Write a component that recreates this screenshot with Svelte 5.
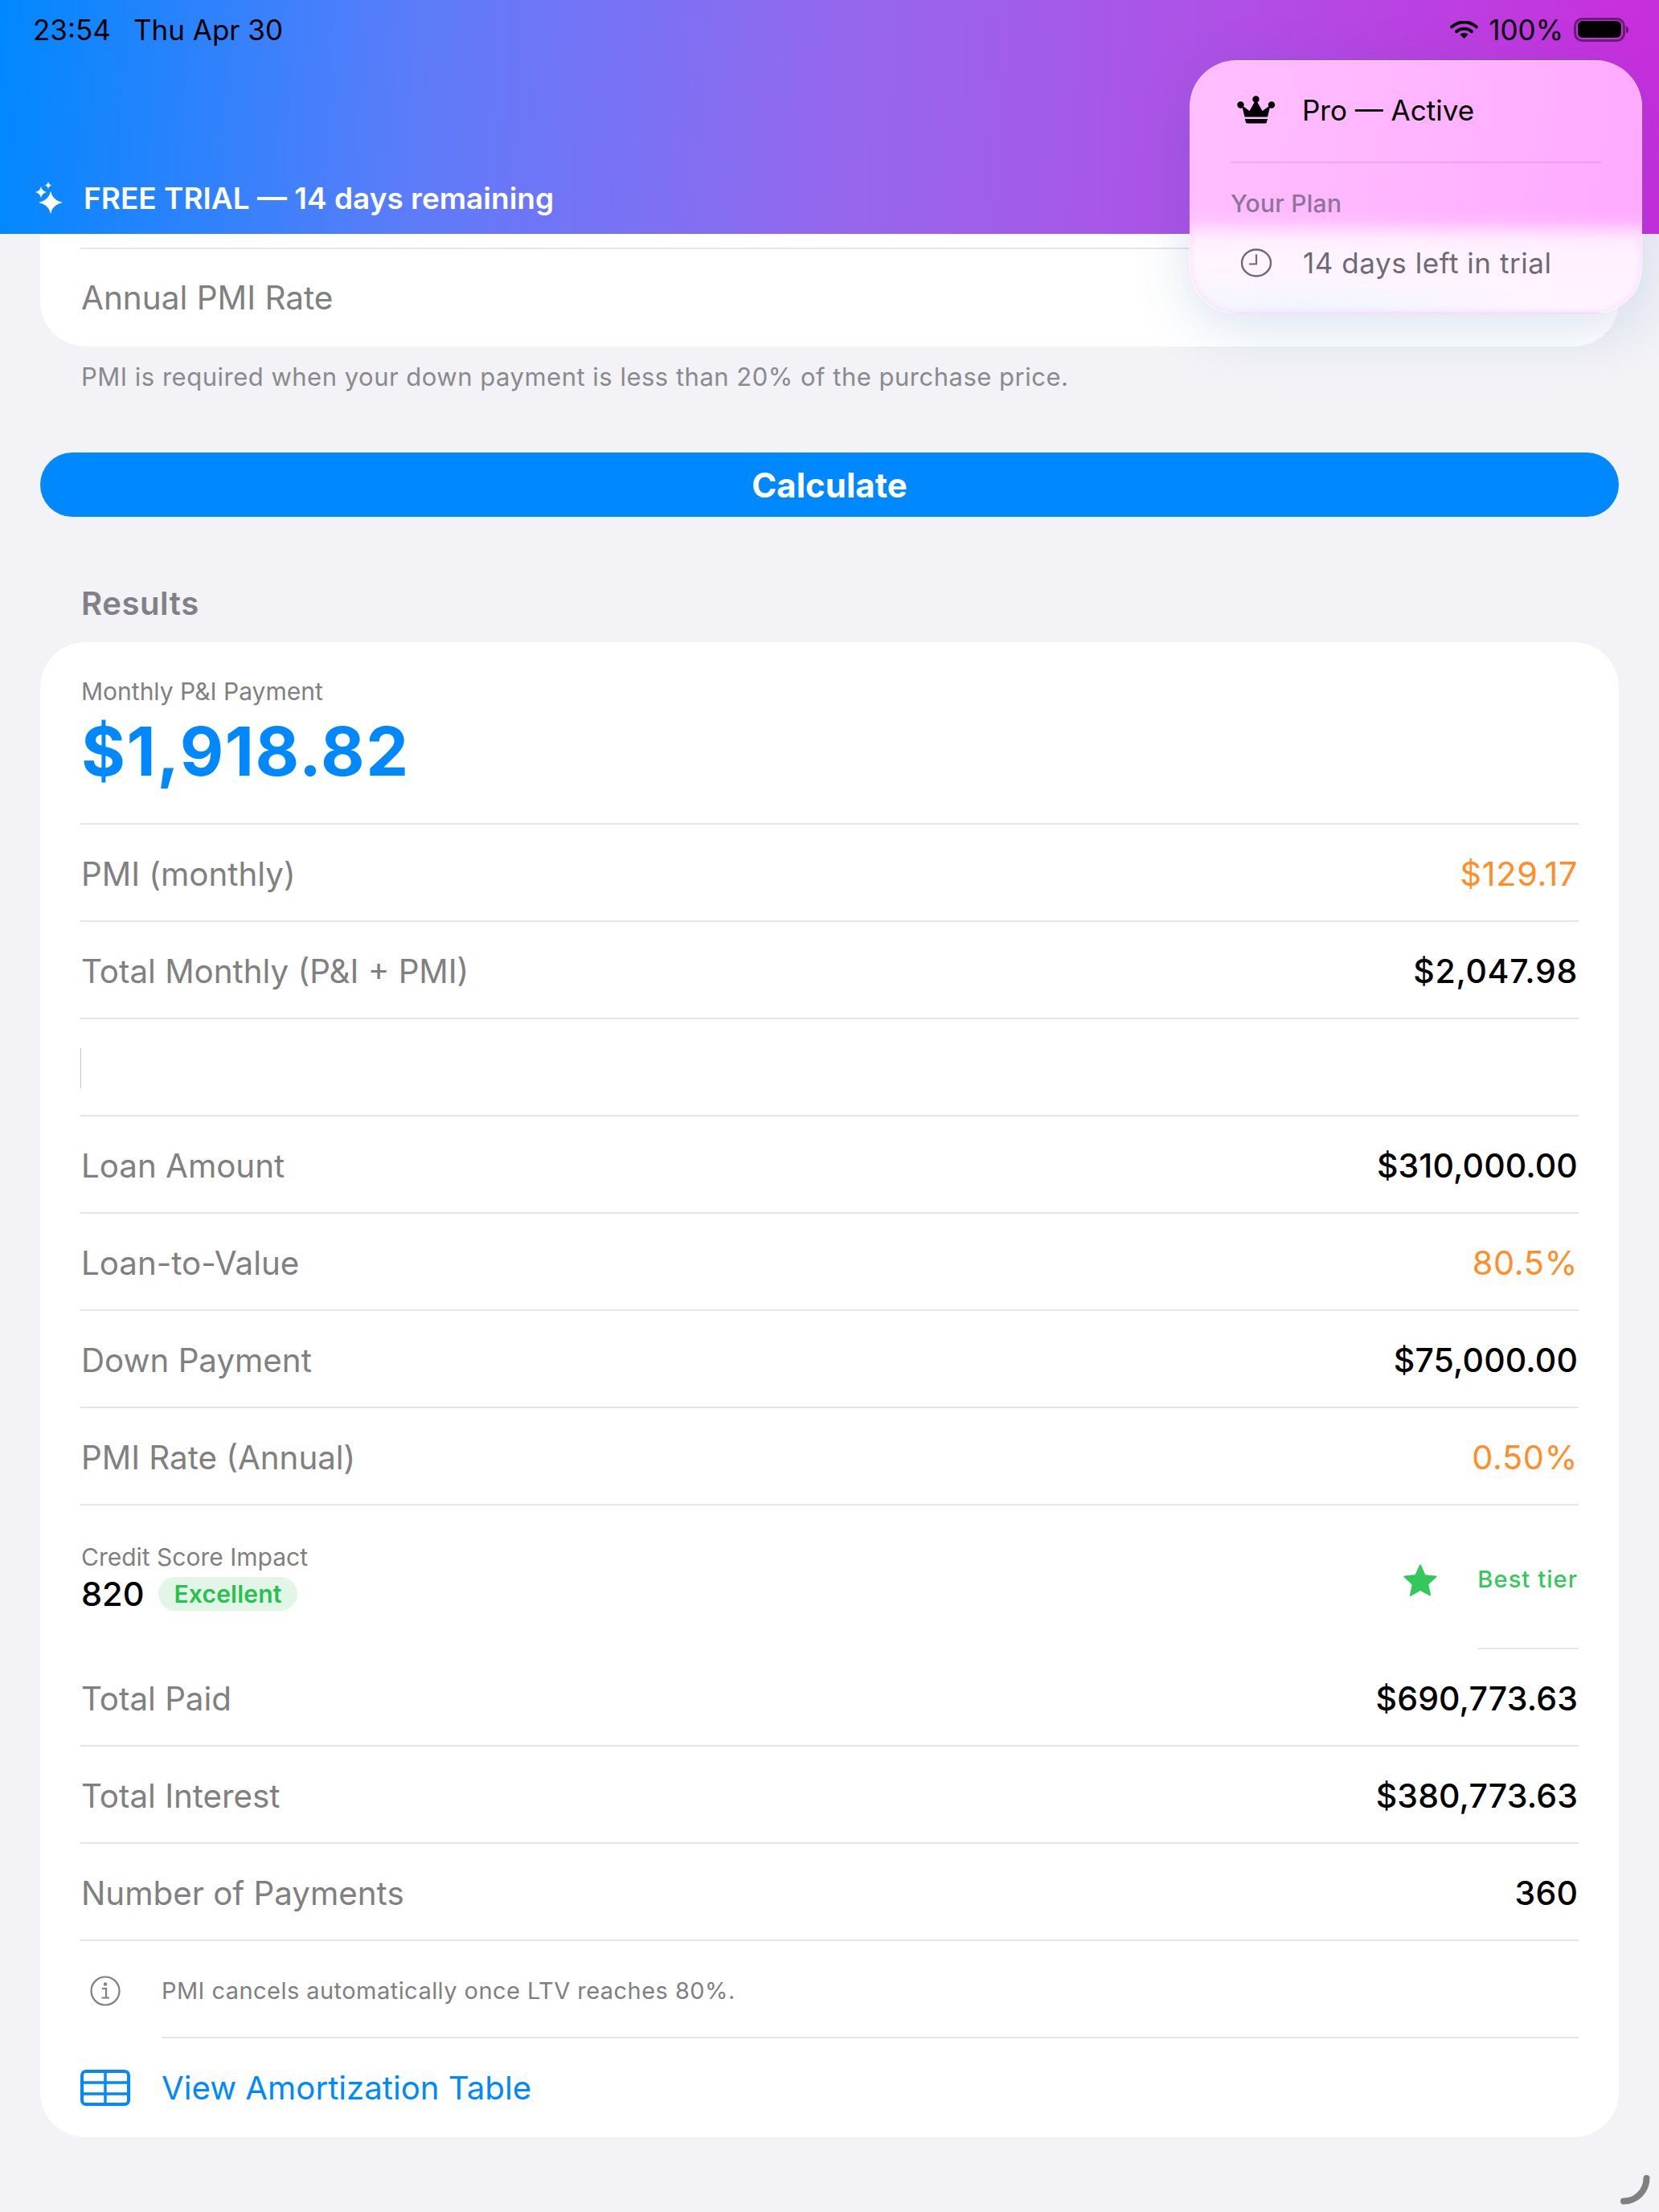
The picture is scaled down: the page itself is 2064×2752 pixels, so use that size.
<script>
  const firstRows = [
    { label: 'PMI (monthly)', value: '$129.17', tone: 'warn' },
    { label: 'Total Monthly (P&I + PMI)', value: '$2,047.98', tone: 'strong' }
  ];
  const midRows = [
    { label: 'Loan Amount', value: '$310,000.00', tone: '' },
    { label: 'Loan-to-Value', value: '80.5%', tone: 'warn' },
    { label: 'Down Payment', value: '$75,000.00', tone: '' },
    { label: 'PMI Rate (Annual)', value: '0.50%', tone: 'warn' }
  ];
  const lastRows = [
    { label: 'Total Paid', value: '$690,773.63', tone: '' },
    { label: 'Total Interest', value: '$380,773.63', tone: '' },
    { label: 'Number of Payments', value: '360', tone: '' }
  ];
</script>

<div class="page">
  <header class="banner">
    <div class="status">
      <span class="clock-text"><span>23:54</span><span>Thu Apr 30</span></span>
      <span class="status-right">
        <svg class="wifi" viewBox="0 0 35 22" aria-hidden="true">
          <path d="M2 7.500a23 23 0 0 1 31 0" fill="none" stroke="#000" stroke-width="3.800" stroke-linecap="round"/>
          <path d="M8 13.200a14.500 14.500 0 0 1 19 0" fill="none" stroke="#000" stroke-width="3.800" stroke-linecap="round"/>
          <path d="M17.500 22l-5.200-5.200a8 8 0 0 1 10.400 0z" fill="#000"/>
        </svg>
        <span>100%</span>
        <svg class="battery" viewBox="0 0 68 30" aria-hidden="true">
          <rect x="1.500" y="1.500" width="61" height="27" rx="9" fill="none" stroke="#000" stroke-opacity=".45" stroke-width="3"/>
          <rect x="5" y="4" width="54" height="21" rx="6" fill="#000"/>
          <path d="M65 10.500c2 .6 3 2.200 3 4.500s-1 3.900-3 4.500z" fill="#000" fill-opacity=".5"/>
        </svg>
      </span>
    </div>
    <div class="trial">
      <svg class="sparkle" viewBox="0 0 44 46" aria-hidden="true">
        <path d="M22 15Q24.500 26.500 37 29 24.500 31.500 22 43 19.500 31.500 7 29 19.500 26.500 22 15z" fill="#fff"/>
        <path d="M10 9Q11.300 14.700 17 16 11.300 17.300 10 23 8.700 17.300 3 16 8.700 14.700 10 9z" fill="#fff"/>
        <path d="M19 3Q19.800 6.700 23.500 7.500 19.800 8.300 19 12 18.200 8.300 14.500 7.500 18.200 6.700 19 3z" fill="#fff"/>
      </svg>
      <span>FREE TRIAL — 14 days remaining</span>
    </div>
  </header>

  <main class="content">
    <section class="card card-top">
      <div class="top-rule"></div>
      <div class="top-row">Annual PMI Rate</div>
    </section>
    <p class="foot">PMI is required when your down payment is less than 20% of the purchase price.</p>

    <button class="calc" type="button">Calculate</button>

    <h2 class="section">Results</h2>

    <section class="card results">
      <div class="hero">
        <span class="hero-label">Monthly P&amp;I Payment</span>
        <span class="hero-value">$1,918.82</span>
      </div>

      {#each firstRows as r}
        <div class="row">
          <span class="label">{r.label}</span>
          <span class="value {r.tone}">{r.value}</span>
        </div>
      {/each}

      <div class="row"><span class="caret"></span></div>

      {#each midRows as r}
        <div class="row">
          <span class="label">{r.label}</span>
          <span class="value {r.tone}">{r.value}</span>
        </div>
      {/each}

      <div class="credit">
        <div class="credit-left">
          <span class="credit-label">Credit Score Impact</span>
          <span class="credit-score"><b>820</b><em class="pill">Excellent</em></span>
        </div>
        <svg class="star" viewBox="0 0 44 42" aria-hidden="true">
          <path d="M22 2.500l5.700 12.600 13.800 1.500-10.300 9.200 2.900 13.500L22 32.900l-12.100 6.900 2.900-13.500L2.500 16.600l13.800-1.500z" fill="#34c759" stroke="#34c759" stroke-width="2" stroke-linejoin="round"/>
        </svg>
        <div class="best"><span>Best tier</span></div>
      </div>

      {#each lastRows as r}
        <div class="row">
          <span class="label">{r.label}</span>
          <span class="value {r.tone}">{r.value}</span>
        </div>
      {/each}

      <div class="note">
        <svg class="info" viewBox="0 0 40 40" aria-hidden="true">
          <circle cx="20" cy="20" r="17.500" fill="none" stroke="#808080" stroke-width="2.200"/>
          <circle cx="20" cy="11.500" r="2.200" fill="#808080"/>
          <path d="M16 17h5v11M15.500 28.500h9.500" fill="none" stroke="#808080" stroke-width="2.200"/>
        </svg>
        <span class="note-text">PMI cancels automatically once LTV reaches 80%.</span>
      </div>

      <div class="table-link">
        <svg class="table" viewBox="0 0 62 45" aria-hidden="true">
          <rect x="2" y="2" width="58" height="41" rx="5" fill="none" stroke="#0088ff" stroke-width="4"/>
          <path d="M2 16h58M2 30h58M31 2v41" fill="none" stroke="#0088ff" stroke-width="3.400"/>
        </svg>
        <span>View Amortization Table</span>
      </div>
    </section>
  </main>

  <aside class="plan">
    <div class="plan-row">
      <svg class="crown" viewBox="0 0 48 36" aria-hidden="true">
        <circle cx="4.500" cy="11.500" r="4.200" fill="#000"/>
        <circle cx="23.500" cy="4.500" r="4.200" fill="#000"/>
        <circle cx="43" cy="11.500" r="4.200" fill="#000"/>
        <path d="M6 12l9.500 7L23.500 5l8 14 10-7-3.500 14.500H9.500z" fill="#000"/>
        <path d="M9.800 29H38l-1.200 4.300q-.4 1.200-1.800 1.200H12.800q-1.400 0-1.800-1.200z" fill="#000"/>
      </svg>
      <span>Pro — Active</span>
    </div>
    <div class="plan-rule"></div>
    <div class="plan-cap">Your Plan</div>
    <div class="plan-row trial-left">
      <svg class="clock" viewBox="0 0 40 36" aria-hidden="true">
        <ellipse cx="20" cy="18" rx="18" ry="16.500" fill="none" stroke="#6e6a75" stroke-width="2.400"/>
        <path d="M20 7.500V19.500H11" fill="none" stroke="#6e6a75" stroke-width="2.200"/>
      </svg>
      <span>14 days left in trial</span>
    </div>
  </aside>

  <svg class="home-arc" viewBox="0 0 50 50" aria-hidden="true">
    <path d="M38.500 10A28.500 28.500 0 0 1 10 38.500" fill="none" stroke="#808080" stroke-width="8" stroke-linecap="round"/>
  </svg>
</div>

<style>
  :global(body) {
    margin: 0;
    background: #f2f2f7;
  }
  .page {
    position: relative;
    width: 2064px;
    height: 2752px;
    overflow: hidden;
    background: #f2f2f7;
    font-family: Inter, "Liberation Sans", sans-serif;
    color: #000;
  }
  .banner {
    box-sizing: border-box;
    height: 291px;
    padding: 16px 38px 21px 41px;
    display: flex;
    flex-direction: column;
    justify-content: space-between;
    background: linear-gradient(93deg, #0088ff 0%, #5c7cfa 25%, #9468ee 50%, #ae52e6 72%, #c92ddc 100%);
  }
  .status {
    display: flex;
    justify-content: space-between;
    align-items: center;
    height: 42px;
    font-size: 35px;
    font-weight: 400;
  }
  .clock-text {
    display: flex;
    gap: 28px;
  }
  .status-right {
    display: flex;
    align-items: center;
    gap: 13px;
  }
  .wifi {
    width: 35px;
    height: 22px;
  }
  .battery {
    width: 68px;
    height: 30px;
  }
  .trial {
    display: flex;
    align-items: center;
    gap: 19px;
    height: 48px;
    color: #fff;
    font-size: 37px;
    font-weight: 600;
  }
  .sparkle {
    width: 44px;
    height: 46px;
  }
  .content {
    padding: 0 50px;
  }
  .card {
    background: #fff;
  }
  .card-top {
    box-sizing: border-box;
    height: 140px;
    padding: 17px 50px 0;
    border-radius: 0 0 56px 56px;
  }
  .top-rule {
    height: 2px;
    background: #e6e6e8;
  }
  .top-row {
    height: 121px;
    display: flex;
    align-items: center;
    padding-left: 1px;
    font-size: 40.500px;
    color: #808080;
  }
  .foot {
    margin: 0;
    padding: 17px 51px 0;
    height: 42px;
    line-height: 42px;
    font-size: 31px;
    letter-spacing: 0.5px;
    color: #8a8a8e;
  }
  .calc {
    display: block;
    width: 100%;
    height: 80px;
    margin-top: 73px;
    border: 0;
    border-radius: 40px;
    background: #0088ff;
    color: #fff;
    font: 700 42px Inter, "Liberation Sans", sans-serif;
  }
  .section {
    margin: 0;
    padding: 85px 51px 0;
    height: 46px;
    line-height: 46px;
    font-size: 40px;
    letter-spacing: 0.6px;
    font-weight: 600;
    color: #808085;
  }
  .results {
    margin-top: 25px;
    padding: 0 50px;
    height: 1860px;
    border-radius: 56px;
    box-sizing: border-box;
  }
  .hero {
    box-sizing: border-box;
    height: 227px;
    padding-top: 41px;
    padding-left: 1px;
    display: flex;
    flex-direction: column;
    border-bottom: 2px solid #e6e6e8;
  }
  .hero-label {
    font-size: 30px;
    line-height: 40px;
    color: #808080;
  }
  .hero-value {
    margin-top: 9px;
    font-size: 84px;
    letter-spacing: 1.5px;
    line-height: 92px;
    font-weight: 700;
    color: #0088ff;
  }
  .row {
    box-sizing: border-box;
    height: 121px;
    padding-top: 3px;
    display: flex;
    align-items: center;
    justify-content: space-between;
    border-bottom: 2px solid #e6e6e8;
  }
  .label {
    margin-left: 1px;
    font-size: 40.300px;
    color: #808080;
  }
  .value {
    margin-right: 1px;
    font-size: 41px;
    letter-spacing: 0.15px;
    font-weight: 450;
    color: #000;
  }
  .value.warn {
    color: #ff8d28;
    font-size: 41.500px;
    letter-spacing: 0.6px;
    font-weight: 400;
  }
  .value.strong {
    letter-spacing: 0.7px;
    font-weight: 550;
  }
  .caret {
    width: 1px;
    height: 50px;
    background: #c4c4c6;
  }
  .credit {
    height: 179px;
    display: flex;
    align-items: stretch;
  }
  .credit-left {
    flex: 1;
    display: flex;
    flex-direction: column;
    padding: 46px 0 0 1px;
    gap: 7px;
  }
  .credit-label {
    font-size: 30px;
    line-height: 36px;
    color: #808080;
  }
  .credit-score {
    display: flex;
    align-items: center;
    gap: 18px;
  }
  .credit-score b {
    font-size: 41.500px;
    font-weight: 550;
    line-height: 42px;
  }
  .pill {
    font-style: normal;
    height: 42px;
    line-height: 42px;
    padding: 0 19px;
    border-radius: 21px;
    background: #e2f6e7;
    color: #28c050;
    font-size: 30px;
    letter-spacing: 0.2px;
    font-weight: 600;
  }
  .star {
    width: 44px;
    height: 42px;
    margin-top: 72px;
    margin-right: 49px;
  }
  .best {
    box-sizing: border-box;
    width: 126px;
    padding: 74px 1px 0 0;
    border-bottom: 2px solid #e6e6e8;
    font-size: 29px;
    letter-spacing: 1.1px;
    line-height: 36px;
    font-weight: 500;
    color: #34c759;
    text-align: right;
    white-space: nowrap;
  }
  .note {
    height: 121px;
    display: flex;
    align-items: center;
  }
  .info {
    width: 40px;
    height: 40px;
    margin: 2px 50px 0 11px;
  }
  .note-text {
    flex: 1;
    box-sizing: border-box;
    height: 121px;
    line-height: 124px;
    font-size: 29px;
    letter-spacing: 0.45px;
    color: #808080;
    border-bottom: 2px solid #e6e6e8;
  }
  .table-link {
    height: 123px;
    display: flex;
    align-items: center;
    gap: 39px;
    color: #0088ff;
    font-size: 40.200px;
  }
  .table {
    width: 62px;
    height: 45px;
  }
  .plan {
    position: absolute;
    left: 1480px;
    top: 75px;
    box-sizing: border-box;
    width: 563px;
    height: 315px;
    padding: 37px 50px 0 50px;
    border-radius: 58px;
    border: 1.500px solid rgba(255, 255, 255, 0.35);
    background:
      radial-gradient(ellipse 55% 16% at 25% 100%, rgba(228, 245, 255, 0.6), rgba(228, 245, 255, 0)),
      linear-gradient(180deg, rgba(255, 255, 255, 0) 0%, rgba(255, 255, 255, 0) 59%, rgba(255, 255, 255, 0.1) 63%, rgba(255, 255, 255, 0.45) 67%, rgba(255, 255, 255, 0.75) 71%, rgba(255, 255, 255, 0.84) 77%, rgba(255, 255, 255, 0.88) 100%),
      linear-gradient(100deg, #ffc0ff 0%, #ffa9ff 100%);
    box-shadow: inset 0 0 8px rgba(255, 170, 255, 0.4), 0 16px 70px rgba(30, 90, 160, 0.17);
  }
  .plan-row {
    display: flex;
    align-items: center;
    gap: 33px;
    height: 48px;
    font-size: 35px;
  }
  .crown {
    width: 48px;
    height: 36px;
    margin-left: 8px;
  }
  .plan-rule {
    height: 2px;
    margin-top: 40px;
    background: rgba(170, 110, 180, 0.22);
  }
  .plan-cap {
    margin-top: 31px;
    height: 38px;
    line-height: 38px;
    font-size: 30px;
    letter-spacing: 0.25px;
    font-weight: 500;
    color: #8f7399;
  }
  .trial-left {
    margin-top: 31px;
    letter-spacing: 0.55px;
    color: #6e6a75;
  }
  .clock {
    width: 40px;
    height: 36px;
    margin-left: 12px;
    margin-right: 5px;
  }
  .home-arc {
    position: absolute;
    left: 2010px;
    top: 2700px;
    width: 50px;
    height: 50px;
  }
</style>
